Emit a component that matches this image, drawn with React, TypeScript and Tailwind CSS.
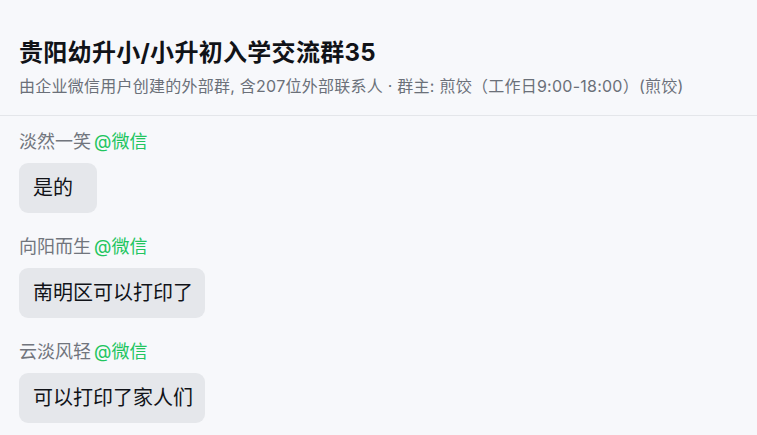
const messages = [
  { name: "淡然一笑", text: "是的" },
  { name: "向阳而生", text: "南明区可以打印了" },
  { name: "云淡风轻", text: "可以打印了家人们" },
]

export default function App() {
  return (
    <div className="min-h-screen bg-[#f7f8fb] font-['Inter','Noto_Sans_CJK_SC',sans-serif]">
      {/* Header */}
      <div className="border-b border-[#e4e6ea] px-[19px] pt-[37px] pb-[17px]">
        <h1 className="text-[24px] leading-8 font-bold tracking-[0.3px] text-[#111318]">
          贵阳幼升小/小升初入学交流群35
        </h1>
        <p className="mt-[5px] text-[16px] leading-6 tracking-[0.25px] text-[#6b7079]">
          由企业微信用户创建的外部群, 含207位外部联系人 · 群主: 煎饺（工作日9:00-18:00）(煎饺)
        </p>
      </div>

      {/* Messages */}
      <div className="flex flex-col gap-[21px] px-[19px] pt-[13px]">
        {messages.map((m) => (
          <div key={m.name} className="flex flex-col items-start">
            <div className="text-[18px] leading-[26px] text-[#71757d]">
              {m.name}
              <span className="ml-[3px] text-[#22c55e]">@微信</span>
            </div>
            <div className="mt-2 min-w-[78px] rounded-[9px] bg-[#e5e7eb] py-[11px] pr-[12px] pl-[14px] text-[20px] leading-7 text-[#111318]">
              {m.text}
            </div>
          </div>
        ))}
      </div>
    </div>
  )
}
